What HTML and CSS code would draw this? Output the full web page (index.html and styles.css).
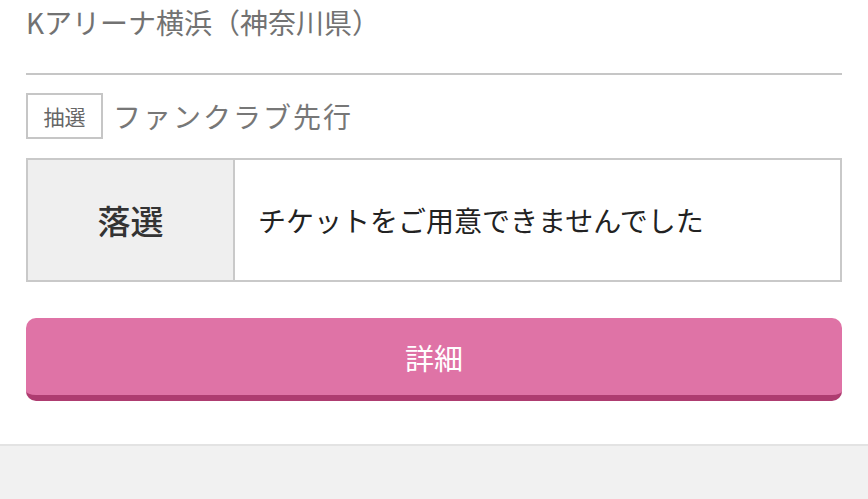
FILE: index.html
```html
<!DOCTYPE html>
<html lang="ja">
<head>
<meta charset="utf-8">
<title>抽選結果</title>
<link rel="stylesheet" href="styles.css">
</head>
<body>
<main class="page">
  <div class="venue">Kアリーナ横浜（神奈川県）</div>
  <div class="entry">
    <span class="tag">抽選</span>
    <span class="kind">ファンクラブ先行</span>
  </div>
  <div class="result">
    <div class="result-label">落選</div>
    <div class="result-text">チケットをご用意できませんでした</div>
  </div>
  <button class="detail-btn" type="button">詳細</button>
</main>
<footer class="footer"></footer>
</body>
</html>
```

FILE: styles.css
```css
* { box-sizing: border-box; }
html, body { margin: 0; padding: 0; background: #fff; }
body {
  font-family: "Noto Sans CJK JP", "Noto Sans", sans-serif;
  width: 868px;
  height: 499px;
  overflow: hidden;
  display: flex;
  flex-direction: column;
}
.page {
  padding: 0 26px;
  display: flex;
  flex-direction: column;
}
.venue {
  font-size: 28px;
  line-height: 44px;
  color: #727272;
  padding-bottom: 29px;
  border-bottom: 2px solid #c6c6c6;
}
.entry {
  margin-top: 18px;
  display: flex;
  align-items: center;
  gap: 10px;
  height: 46px;
}
.tag {
  width: 77px;
  height: 46px;
  border: 2px solid #c6c6c6;
  display: flex;
  align-items: center;
  justify-content: center;
  font-size: 21px;
  color: #666;
}
.kind {
  font-size: 28px;
  letter-spacing: 2px;
  color: #777;
}
.result {
  margin-top: 19px;
  display: flex;
  height: 124px;
  border: 2px solid #c9c9c9;
}
.result-label {
  width: 207px;
  background: #efefef;
  border-right: 2px solid #c9c9c9;
  display: flex;
  align-items: center;
  justify-content: center;
  font-size: 33px;
  font-weight: 500;
  color: #333;
}
.result-text {
  flex: 1;
  display: flex;
  align-items: center;
  padding-left: 23px;
  font-size: 28px;
  color: #222;
}
.detail-btn {
  margin-top: 36px;
  height: 83px;
  border: none;
  border-bottom: 6px solid #ae3c70;
  border-radius: 10px;
  background: #df73a6;
  color: #fff;
  font-family: inherit;
  font-size: 29px;
  padding: 0;
}
.footer {
  margin-top: 43px;
  flex: 1;
  background: #f1f1f1;
  border-top: 2px solid #e3e3e3;
}
```
